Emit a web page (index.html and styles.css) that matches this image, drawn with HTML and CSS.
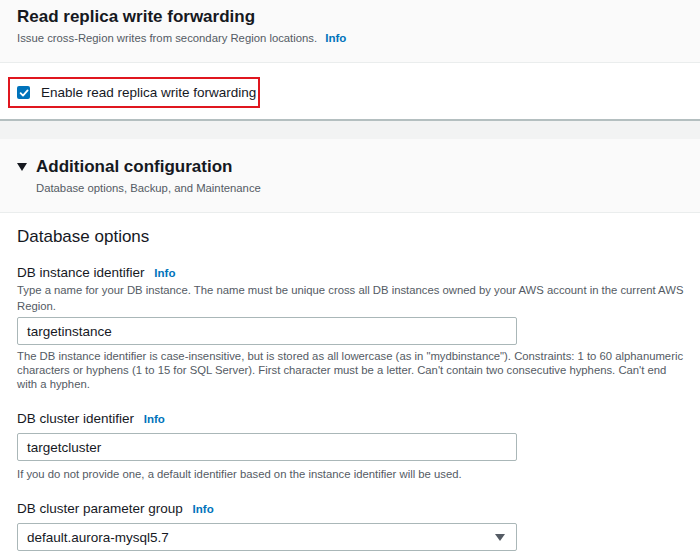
FILE: index.html
```html
<!DOCTYPE html>
<html>
<head>
<meta charset="utf-8">
<link rel="stylesheet" href="styles.css">
</head>
<body>
<div class="page">
  <section class="head">
    <h2 class="title">Read replica write forwarding</h2>
    <p class="sub">Issue cross-Region writes from secondary Region locations. <a class="info">Info</a></p>
  </section>
  <section class="checkrow">
    <label class="check">
      <span class="box"><svg width="12" height="12" viewBox="0 0 12 12"><path d="M2.6 6.2 L5 8.6 L9.6 3.4" fill="none" stroke="#fff" stroke-width="1.8" stroke-linecap="round" stroke-linejoin="round"/></svg></span>
      <span>Enable read replica write forwarding</span>
    </label>
  </section>
  <div class="band"></div>
  <section class="expand">
    <h2 class="title exp-title"><span class="caret"></span>Additional configuration</h2>
    <p class="sub exp-sub">Database options, Backup, and Maintenance</p>
  </section>
  <section class="content">
    <h3 class="group">Database options</h3>
    <div class="field">
      <div class="label">DB instance identifier <a class="info">Info</a></div>
      <div class="hint pre">Type a name for your DB instance. The name must be unique cross all DB instances owned by your AWS account in the current AWS Region.</div>
      <div class="input after-hint">targetinstance</div>
      <div class="hint after">The DB instance identifier is case-insensitive, but is stored as all lowercase (as in "mydbinstance"). Constraints: 1 to 60 alphanumeric characters or hyphens (1 to 15 for SQL Server). First character must be a letter. Can't contain two consecutive hyphens. Can't end<br>with a hyphen.</div>
    </div>
    <div class="field">
      <div class="label">DB cluster identifier <a class="info">Info</a></div>
      <div class="input">targetcluster</div>
      <div class="hint after help">If you do not provide one, a default identifier based on the instance identifier will be used.</div>
    </div>
    <div class="field">
      <div class="label">DB cluster parameter group <a class="info">Info</a></div>
      <div class="input select"><span>default.aurora-mysql5.7</span><span class="arrow"></span></div>
    </div>
  </section>
</div>
</body>
</html>
```
FILE: styles.css
```css
* { box-sizing: border-box; }
body { margin: 0; background: #fff; font-family: "Liberation Sans", Arial, sans-serif; color: #16191f; }
.page { width: 700px; }
.head { background: #fafafa; border-bottom: 1px solid #eaeded; padding: 6px 17px 16px; height: 63px; }
.title { margin: 0; font-size: 17px; line-height: 22px; font-weight: bold; color: #16191f; }
.sub { margin: 2px 0 0; font-size: 11.3px; line-height: 16px; color: #545b64; }
.info { color: #0073bb; font-weight: bold; margin-left: 6px; font-size: 11.5px; }
.sub .info { margin-left: 5px; }
.checkrow { height: 58px; padding: 14px 8px 0; border-bottom: 2px solid #b4bfc0; }
.check { display: inline-flex; align-items: center; gap: 11px; height: 31px; width: 252px; border: 2px solid #e0161f; padding-left: 7px; font-size: 13.5px; color: #16191f; }
.box { width: 13px; height: 13px; background: #0073bb; border-radius: 2px; display: flex; align-items: center; justify-content: center; }
.band { height: 18px; background: #f2f3f3; }
.expand { background: #fafafa; border-bottom: 1px solid #eaeded; height: 74px; padding: 17px 17px 0; }
.exp-title { display: flex; align-items: center; font-size: 17px; }
.caret { width: 0; height: 0; border-left: 5px solid transparent; border-right: 5px solid transparent; border-top: 8px solid #16191f; margin-right: 9px; }
.exp-sub { margin: 2px 0 0 19px; font-size: 11.3px; }
.content { padding: 13px 10px 0 17px; }
.group { margin: 0 0 16px; font-size: 17px; font-weight: normal; line-height: 22px; }
.field { margin-bottom: 19px; }
.field + .field + .field { margin-top: 1px; }
.label { font-size: 13.5px; line-height: 18px; }
.label .info { margin-left: 6px; font-size: 11.5px; }
.hint { font-size: 11.3px; color: #545b64; }
.hint.pre { line-height: 16px; }
.hint.after { margin-top: 4px; line-height: 14px; }
.hint.after.help { margin-top: 6px; }
.input { margin-top: 5px; width: 500px; height: 28px; border: 1px solid #aab7b8; border-radius: 2px; padding: 0 9px; font-size: 13.5px; display: flex; align-items: center; }
.input.after-hint { margin-top: 3px; }
.select { justify-content: space-between; }
.arrow { width: 0; height: 0; border-left: 5px solid transparent; border-right: 5px solid transparent; border-top: 7px solid #545b64; margin-right: 2px; }
```
